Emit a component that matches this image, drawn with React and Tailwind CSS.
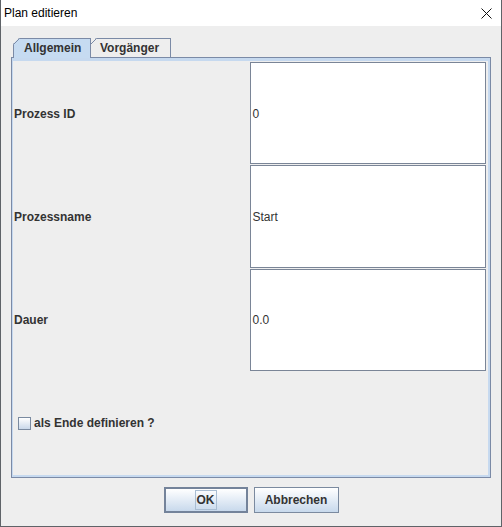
import React from "react";

function TabCorner({ fill }) {
  return (
    <svg className="absolute -left-px -top-px" width="7" height="7" viewBox="0 0 7 7">
      <polygon points="0,0 6,0 0,6" fill="#eeeeee" />
      <polygon points="0.5,6.5 6.5,0.5 7,0.5 7,7 0.5,7" fill={fill} />
      <line x1="0.5" y1="6.5" x2="6.5" y2="0.5" stroke="#7b8aa6" strokeWidth="1" />
    </svg>
  );
}

function Tab({ label, selected }) {
  return (
    <div
      className={
        "relative flex items-center border-t border-l border-r border-[#7b8aa6] font-bold text-[12px] text-[#333333] " +
        (selected
          ? "z-10 -mb-[1px] h-[20px] w-[78px] bg-[#c6dbf1] pl-[10px] border-r-[#7b8aa6]"
          : "h-[19px] w-[80px] bg-[#eeeeee] pl-[9px] border-l-0")
      }
    >
      <TabCorner fill={selected ? "#c6dbf1" : "#eeeeee"} />
      <span className="relative -mt-[1px]">{label}</span>
    </div>
  );
}

function FieldRow({ label, value }) {
  return (
    <>
      <div className="flex items-center pl-[1px] pt-[1px] font-bold text-[12px] text-[#333333]">{label}</div>
      <div className="flex items-center border border-[#7a8597] bg-white pl-[2px] pt-[1px] text-[12px] text-[#333333]">
        {value}
      </div>
    </>
  );
}

export default function App() {
  return (
    <div className="flex h-[527px] w-[502px] flex-col border border-t-0 border-[#5f6368] font-['Liberation_Sans',Arial,sans-serif]">
      <div className="flex h-[26px] items-center justify-between bg-white pl-[3px] pr-[9px]">
        <span className="text-[12px] text-black">Plan editieren</span>
        <svg width="11" height="11" viewBox="0 0 11 11">
          <line x1="0.5" y1="0.5" x2="10.5" y2="10.5" stroke="#111" strokeWidth="1" />
          <line x1="10.5" y1="0.5" x2="0.5" y2="10.5" stroke="#111" strokeWidth="1" />
        </svg>
      </div>

      <div className="flex flex-1 flex-col bg-[#eeeeee] px-[10px] pt-[12px]">
        <div className="flex items-end pl-[2px]">
          <Tab label="Allgemein" selected />
          <Tab label="Vorgänger" />
        </div>
        <div className="h-[421px] border border-[#7b8aa6]">
          <div className="grid h-full grid-cols-2 grid-rows-4 gap-y-[1px] border-t-[3px] border-l border-r-2 border-b-2 border-[#c6d9ef] py-[1px] pr-[2px]">
            <FieldRow label="Prozess ID" value="0" />
            <FieldRow label="Prozessname" value="Start" />
            <FieldRow label="Dauer" value="0.0" />
            <div className="flex items-center gap-[3px] pl-[5px] pt-[1px]">
              <span className="h-[13px] w-[13px] border border-[#7a8aa0] bg-gradient-to-b from-white to-[#c9d8ea]" />
              <span className="font-bold text-[12px] text-[#333333]">als Ende definieren ?</span>
            </div>
            <div />
          </div>
        </div>

        <div className="flex justify-center gap-[6px] pt-[9px]">
          <button className="flex h-[26px] w-[84px] items-center justify-center border-2 border-[#74839a] bg-gradient-to-b from-white to-[#c8d9ec] font-bold text-[12px] text-[#333333]">
            <span className="border border-[#a9bdd2] px-[1px] py-[2px] leading-[14px]">OK</span>
          </button>
          <button className="flex h-[26px] w-[85px] items-center justify-center border border-[#7b8a9f] bg-gradient-to-b from-white to-[#c8d9ec] font-bold text-[12px] text-[#333333]">
            Abbrechen
          </button>
        </div>
      </div>
    </div>
  );
}
